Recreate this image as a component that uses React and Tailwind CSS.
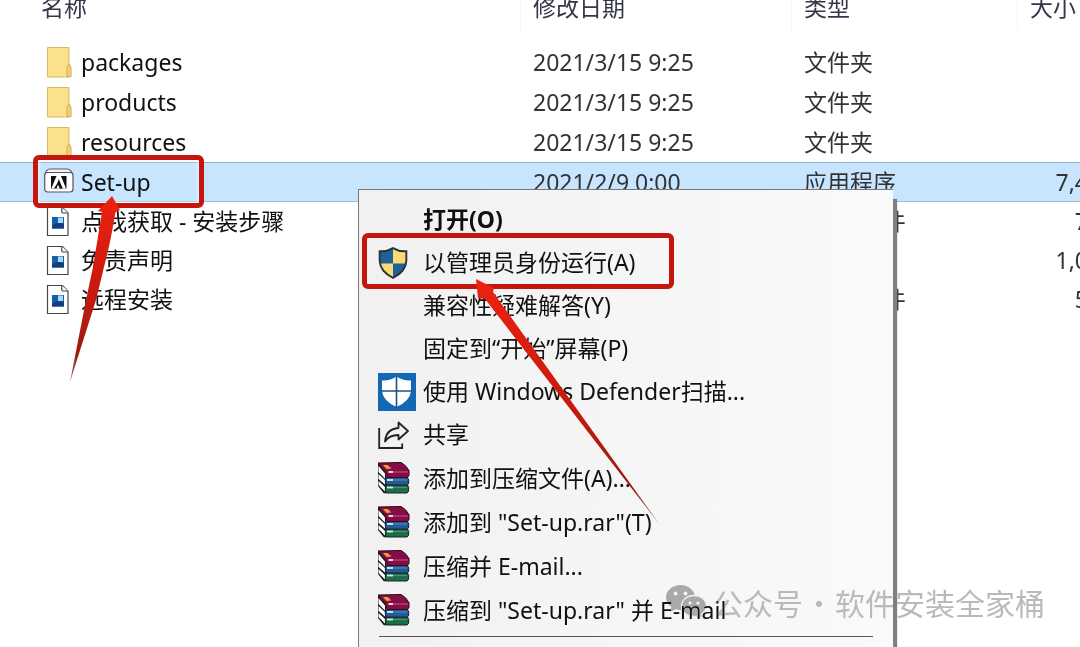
import React from 'react';

const files = [
  { name: 'packages', date: '2021/3/15 9:25', type: '文件夹', size: '', icon: 'folder' },
  { name: 'products', date: '2021/3/15 9:25', type: '文件夹', size: '', icon: 'folder' },
  { name: 'resources', date: '2021/3/15 9:25', type: '文件夹', size: '', icon: 'folder' },
  { name: 'Set-up', date: '2021/2/9 0:00', type: '应用程序', size: '7,4', icon: 'adobe', selected: true },
  { name: '点我获取 - 安装步骤', date: '', type: 'JPEG 文件', size: '7', icon: 'image' },
  { name: '免责声明', date: '', type: '', size: '1,0', icon: 'image' },
  { name: '远程安装', date: '', type: 'JPEG 文件', size: '5', icon: 'image' },
];

const systemItems = [
  { label: '打开(O)', bold: true },
  { label: '以管理员身份运行(A)', icon: 'shield' },
  { label: '兼容性疑难解答(Y)' },
  { label: '固定到“开始”屏幕(P)' },
  { label: '使用 Windows Defender扫描...', icon: 'defender' },
  { label: '共享', icon: 'share' },
];

const archiveItems = [
  { label: '添加到压缩文件(A)...', icon: 'rar' },
  { label: '添加到 "Set-up.rar"(T)', icon: 'rar' },
  { label: '压缩并 E-mail...', icon: 'rar' },
  { label: '压缩到 "Set-up.rar" 并 E-mail', icon: 'rar' },
];

const FolderIcon = () => (
  <svg width="28" height="32" viewBox="0 0 28 32" aria-hidden="true">
    <path d="M3.500 1.500h21.500v29.500H3.500z" fill="#fbe18c" stroke="#d9b860" />
    <path d="M23 30.500V22q1.500-5 3-3l1 3v8.500z" fill="#f6d272" stroke="#d3a84e" />
  </svg>
);

const AdobeIcon = () => (
  <svg width="30" height="28" viewBox="0 0 30 28" aria-hidden="true">
    <path d="M1 7Q2 1 6 1h17q4 0 6 6" fill="#f4f4f6" stroke="#56565e" strokeWidth="1.200" />
    <rect x="0.700" y="4.500" width="28.300" height="19.500" rx="3" fill="#fff" stroke="#56565e" strokeWidth="1.200" />
    <rect x="7" y="8" width="15.500" height="12.500" fill="#111" />
    <path d="M12.500 8h4.500l5 12.500h-3.700l-1.400-3.500h-2.600l1.400 3.500h-3l2.200-7.500-5 7.500H7.300z" fill="#fff" />
    <path d="M14.800 11l3.900 9.500h-2.300l-1.400-3.300h-2.200z" fill="#111" />
  </svg>
);

const ImageFileIcon = () => (
  <svg width="26" height="32" viewBox="0 0 26 32" aria-hidden="true">
    <path d="M3.500 1.500h15l5.500 5.500v22.500H3.500z" fill="#fff" stroke="#45454b" strokeWidth="1.200" />
    <path d="M18 1.500q-1 5.500 1 5.500h5" fill="#fff" stroke="#45454b" strokeWidth="1.200" />
    <rect x="8" y="11" width="12" height="11.500" fill="#1560a8" />
    <path d="M14 11.500h5v5.500h-5z" fill="#a6daf5" />
    <path d="M8 19.500q6-4 12-1.500v4.500H8z" fill="#123f7c" />
  </svg>
);

const ShieldIcon = () => (
  <svg width="30" height="32" viewBox="0 0 28 30" aria-hidden="true">
    <path d="M14 1Q8 4.500 1.500 4v9Q2 23 14 29z" fill="#1f6097" />
    <path d="M14 1q6 3.500 12.500 3v9Q26 23 14 29z" fill="#fbda74" />
    <path d="M1.500 15.500H14V29Q3 24 1.500 15.500z" fill="#fbda74" />
    <path d="M14 15.500h12.500Q25 24 14 29z" fill="#1f6097" />
    <path d="M14 1q6 3.500 12.500 3v9Q26 23 14 29 2 23 1.500 13V4Q8 4.500 14 1z" fill="none" stroke="#2b3338" strokeWidth="1.800" />
  </svg>
);

const DefenderIcon = () => (
  <svg width="38" height="38" viewBox="0 0 38 38" aria-hidden="true">
    <path d="M0 0h38v38H0z" fill="#1268b3" />
    <path d="M18.500 3.500Q12 8 4 7.500V18q1 10 14.500 16Q32 28 33 18V7.500q-8 .5-14.500-4z" fill="#fff" />
    <path d="M18.500 3v32M3 18h31" stroke="#1c5187" strokeWidth="1.600" />
  </svg>
);

const ShareIcon = () => (
  <svg width="32" height="30" viewBox="0 0 32 30" fill="none" stroke="#222" strokeWidth="1.800" aria-hidden="true">
    <path d="M1.200 8v20h23v-4.500" />
    <path d="M20.500 2.500L30 11l-9.500 8.500V15Q11 15 7 21.500 8 9 20.500 8z" strokeLinejoin="round" />
  </svg>
);

const RarIcon = () => (
  <svg width="32" height="32" viewBox="0 0 32 32" aria-hidden="true">
    <path d="M0 1l8 9v21l-2 .5L0 24z" fill="#1b1b1d" />
    <path d="M.5 4L7 11.500v5L.5 10zM.5 12L7 18v4.500L.5 17zM.5 19L7 25v4.500L.5 23z" fill="#fff" />
    <path d="M8 23h21.500q2 2 1 6.500l-1.500 1.500H8q-1.500-4 0-8z" fill="#1d6b49" stroke="#102a20" />
    <path d="M9 25.500h6" stroke="#d3eedd" strokeWidth="1.800" />
    <path d="M15 25.500h14" stroke="#4c9471" strokeWidth="1.200" />
    <path d="M8 15.500h21.500q2 2 1 6.500L29 23H8q-1.500-3.500 0-7.500z" fill="#245b94" stroke="#13243d" />
    <path d="M9 18h6" stroke="#d6e9fa" strokeWidth="1.800" />
    <path d="M15 18h14" stroke="#5589bb" strokeWidth="1.200" />
    <path d="M0 1L23 .500q5 2.500 8 8v5L29.500 15.500H9Q8 8 0 1z" fill="#850d45" stroke="#2f0a1b" />
    <path d="M10.500 10H15" stroke="#f6d3e2" strokeWidth="2" />
    <path d="M15 10h15" stroke="#b5527f" strokeWidth="1.200" />
    <path d="M5 3h4.500l4 3.500-5 .5z" fill="#f39b3c" />
  </svg>
);

const icons = {
  folder: FolderIcon,
  adobe: AdobeIcon,
  image: ImageFileIcon,
  shield: ShieldIcon,
  defender: DefenderIcon,
  share: ShareIcon,
  rar: RarIcon,
};

const Icon = ({ name }) => {
  const Glyph = icons[name];
  return Glyph ? <Glyph /> : null;
};

const rowClass = (file) => {
  if (file.selected) {
    return 'leading-10 bg-[#c8e5ff] shadow-[inset_0_1px_#8fb0cb,inset_0_-1px_#9dbdd6]';
  }
  return file.icon === 'folder' ? 'leading-10' : 'leading-[39px]';
};

const HeaderCell = ({ children, first }) => (
  <th scope="col" className="h-[42px] p-0 text-left align-top font-normal">
    <div className={first ? 'h-[30px] pl-[41px] leading-[14px]' : 'h-[30px] border-l border-gray-100 pl-3 leading-[14px]'}>
      {children}
    </div>
  </th>
);

const FileTable = () => (
  <table className="w-[calc(100%+8px)] table-fixed border-collapse whitespace-nowrap text-[23px] text-[#333]">
    <colgroup>
      <col />
      <col className="w-[271px]" />
      <col className="w-[226px]" />
      <col className="w-[71px]" />
    </colgroup>
    <thead className="text-[#34364a]">
      <tr>
        <HeaderCell first>名称</HeaderCell>
        <HeaderCell>修改日期</HeaderCell>
        <HeaderCell>类型</HeaderCell>
        <HeaderCell>大小</HeaderCell>
      </tr>
    </thead>
    <tbody>
      {files.map((file) => (
        <tr key={file.name} className={rowClass(file)}>
          <td className="p-0">
            <div className="flex items-center pl-11 text-[#111]">
              <span className="flex w-[37px] shrink-0">
                <Icon name={file.icon} />
              </span>
              <span>{file.name}</span>
            </div>
          </td>
          <td className="p-0 pl-[13px]">{file.date}</td>
          <td className="p-0 pl-[13px]">{file.type}</td>
          <td className="p-0 text-right">{file.size}</td>
        </tr>
      ))}
    </tbody>
  </table>
);

const MenuItem = ({ item, className }) => (
  <li>
    <button type="button" className={`flex w-full items-center pl-[19px] text-left ${className}`}>
      <span className="flex w-[45px] shrink-0">
        <Icon name={item.icon} />
      </span>
      <span className={item.bold ? 'font-bold' : ''}>{item.label}</span>
    </button>
  </li>
);

const ContextMenu = () => (
  <div className="absolute top-[189px] bottom-0 left-[358px] w-[535px] border-t border-l border-[#777] bg-linear-to-r from-[#f1f1f1] to-[#fafafa] pt-2 text-[23px] whitespace-nowrap text-[#111] shadow-[4px_10px_1px_#808080]">
    <ul>
      {systemItems.map((item) => (
        <MenuItem key={item.label} item={item} className="h-[43px]" />
      ))}
    </ul>
    <ul>
      {archiveItems.map((item) => (
        <MenuItem key={item.label} item={item} className="h-11" />
      ))}
    </ul>
    <hr className="mt-1 mr-5 ml-5 border-[#555]" />
  </div>
);

const Annotations = () => (
  <>
    <div className="absolute top-[155px] left-[33px] h-[53px] w-[171px] rounded-md border-[5px] border-[#c4160f] shadow-[inset_0_0_4px_#fff]" />
    <div className="absolute top-[233px] left-[362px] h-[56px] w-[312px] rounded-md border-[5px] border-[#c4160f]" />
    <svg className="absolute top-0 left-0" width="700" height="540" viewBox="0 0 700 540" aria-hidden="true">
      <defs>
        <linearGradient id="shaft" x1="0" y1="0" x2="0" y2="1">
          <stop offset="0" stopColor="#ee2211" />
          <stop offset="0.5" stopColor="#c9190e" />
          <stop offset="0.85" stopColor="#9c1a10" />
          <stop offset="1" stopColor="#85706c" />
        </linearGradient>
      </defs>
      <path d="M112 196L120 210 115.500 212Q110 245 104 267L96 300 70 382 86 300 93 267 102 212 98 211z" fill="url(#shaft)" />
      <path d="M476 279L494 288 493 292 660 525 485 299 478 298z" fill="url(#shaft)" />
    </svg>
  </>
);

const Watermark = () => (
  <div className="absolute top-[580px] left-[666px] flex items-center gap-1.5 font-['Noto_Sans_CJK_SC',sans-serif] text-[30px] leading-[44px] whitespace-nowrap text-[#bababa] mix-blend-darken">
    <svg width="41" height="36" viewBox="0 0 41 36" aria-hidden="true">
      <path d="M14.500 1C6.500 1 0 6.500 0 13.500c0 4 2.200 7.300 5.500 9.700L4 28l5.500-2.800q2.500.8 5 .8C22.500 26 29 20.500 29 13.500S22.500 1 14.500 1z" fill="#a9a9a9" />
      <circle cx="9.500" cy="9.500" r="1.900" fill="#f6f6f6" />
      <circle cx="19.500" cy="9.500" r="1.900" fill="#f6f6f6" />
      <path d="M28 11.500c-7 0-12.500 4.800-12.500 10.500S21 32.500 28 32.500q2.200 0 4-.6l4.500 2.600-1.200-4.200c3-2 5-4.800 5-8.300C40.300 16.300 35 11.500 28 11.500z" fill="#a9a9a9" stroke="#ededed" strokeWidth="1.300" />
      <circle cx="24" cy="19" r="1.600" fill="#f6f6f6" />
      <circle cx="32" cy="19" r="1.600" fill="#f6f6f6" />
    </svg>
    <span className="flex gap-px">
      <span>公众号</span>
      <span>·</span>
      <span>软件安装全家桶</span>
    </span>
  </div>
);

export default function App() {
  return (
    <main className="relative h-screen overflow-hidden bg-white font-['Noto_Sans','Noto_Sans_CJK_SC',sans-serif]">
      <FileTable />
      <ContextMenu />
      <Watermark />
      <Annotations />
    </main>
  );
}
